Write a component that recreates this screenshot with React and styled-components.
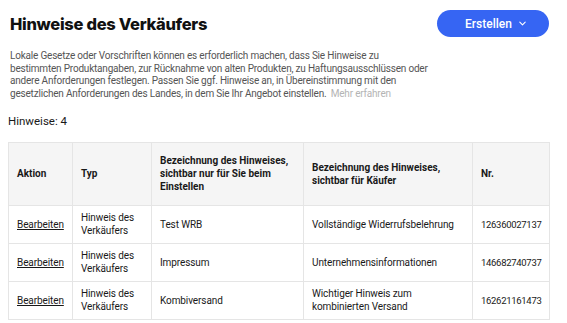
import React from "react";
import styled, { createGlobalStyle } from "styled-components";

const rows = [
  { typ: "Hinweis des Verkäufers", intern: "Test WRB", kaeufer: "Vollständige Widerrufsbelehrung", nr: "126360027137" },
  { typ: "Hinweis des Verkäufers", intern: "Impressum", kaeufer: "Unternehmensinformationen", nr: "146682740737" },
  { typ: "Hinweis des Verkäufers", intern: "Kombiversand", kaeufer: "Wichtiger Hinweis zum kombinierten Versand", nr: "162621161473" },
];

const App = () => {
  return (
    <>
      <GlobalStyle />
      <Page>
        <Header>
          <Titel>Hinweise des Verkäufers</Titel>
          <Button>
            Erstellen
            <svg width="9" height="9" viewBox="0 0 10 10" fill="none">
              <path d="M2 3.5l3 3 3-3" stroke="#fff" strokeWidth="1.2" strokeLinecap="round" strokeLinejoin="round" />
            </svg>
          </Button>
        </Header>
        <Text>
          Lokale Gesetze oder Vorschriften können es erforderlich machen, dass Sie Hinweise zu<br />
          bestimmten Produktangaben, zur Rücknahme von alten Produkten, zu Haftungsausschlüssen oder<br />
          andere Anforderungen festlegen. Passen Sie ggf. Hinweise an, in Übereinstimmung mit den<br />
          gesetzlichen Anforderungen des Landes, in dem Sie Ihr Angebot einstellen. <Mehr>Mehr erfahren</Mehr>
        </Text>
        <Anzahl>Hinweise: 4</Anzahl>
        <Tabelle>
          <colgroup>
            <col style={{ width: 64 }} />
            <col style={{ width: 79 }} />
            <col style={{ width: 152 }} />
            <col style={{ width: 169 }} />
            <col style={{ width: 77 }} />
          </colgroup>
          <thead>
            <tr>
              <Th>Aktion</Th>
              <Th>Typ</Th>
              <Th>Bezeichnung des Hinweises, sichtbar nur für Sie beim Einstellen</Th>
              <Th>Bezeichnung des Hinweises, sichtbar für Käufer</Th>
              <Th>Nr.</Th>
            </tr>
          </thead>
          <tbody>
            {rows.map((r) => (
              <tr key={r.nr}>
                <Td><Link href="#">Bearbeiten</Link></Td>
                <Td>{r.typ}</Td>
                <Td>{r.intern}</Td>
                <Td $wide>{r.kaeufer}</Td>
                <Td $num>{r.nr}</Td>
              </tr>
            ))}
          </tbody>
        </Tabelle>
      </Page>
    </>
  );
};

const GlobalStyle = createGlobalStyle`
  body {
    margin: 0;
    background: #fff;
    font-family: Roboto, "Open Sans", sans-serif;
    color: #191919;
    overflow: hidden;
  }
`;

const Page = styled.div`
  padding: 10px 18px 0 8px;
`;

const Header = styled.div`
  display: flex;
  justify-content: space-between;
  align-items: center;
  padding-left: 2px;
  height: 27px;
`;

const Titel = styled.h1`
  margin: 0;
  font-family: Inter, sans-serif;
  font-size: 16.5px;
  font-weight: 800;
  letter-spacing: -0.3px;
  color: #111;
`;

const Button = styled.button`
  width: 112px;
  height: 27px;
  border: none;
  border-radius: 14px;
  background: #3665f3;
  color: #fff;
  font-family: Roboto, sans-serif;
  font-size: 12px;
  font-weight: 500;
  display: flex;
  align-items: center;
  justify-content: center;
  gap: 6px;
  padding: 0 0 0 6px;
`;

const Text = styled.p`
  margin: 13px 0 0 2px;
  font-size: 10px;
  line-height: 12.7px;
  letter-spacing: -0.2px;
  color: #555;
  white-space: nowrap;
`;

const Mehr = styled.span`
  color: #b4b4b4;
  margin-left: 2px;
`;

const Anzahl = styled.div`
  margin-top: 13px;
  font-size: 11.5px;
  color: #191919;
`;

const Tabelle = styled.table`
  margin-top: 14px;
  border-collapse: collapse;
  width: 541px;
  table-layout: fixed;
  border: 1px solid #e5e5e5;
`;

const Th = styled.th`
  background: #f5f5f5;
  height: 62px;
  padding: 0 8px;
  text-align: left;
  font-size: 10px;
  line-height: 13px;
  font-weight: 700;
  color: #191919;
  border: 1px solid #e5e5e5;
`;

const Td = styled.td`
  height: 37px;
  padding: 0 ${(p) => (p.$wide ? "14px" : "8px")} 0 8px;
  font-size: ${(p) => (p.$num ? "9.5px" : "10px")};
  line-height: 13px;
  letter-spacing: ${(p) => (p.$num ? "-0.3px" : "-0.1px")};
  color: #191919;
  border: 1px solid #e5e5e5;
  vertical-align: middle;
  white-space: ${(p) => (p.$num ? "nowrap" : "normal")};
`;

const Link = styled.a`
  color: #191919;
  text-decoration: underline;
`;

export default App;
